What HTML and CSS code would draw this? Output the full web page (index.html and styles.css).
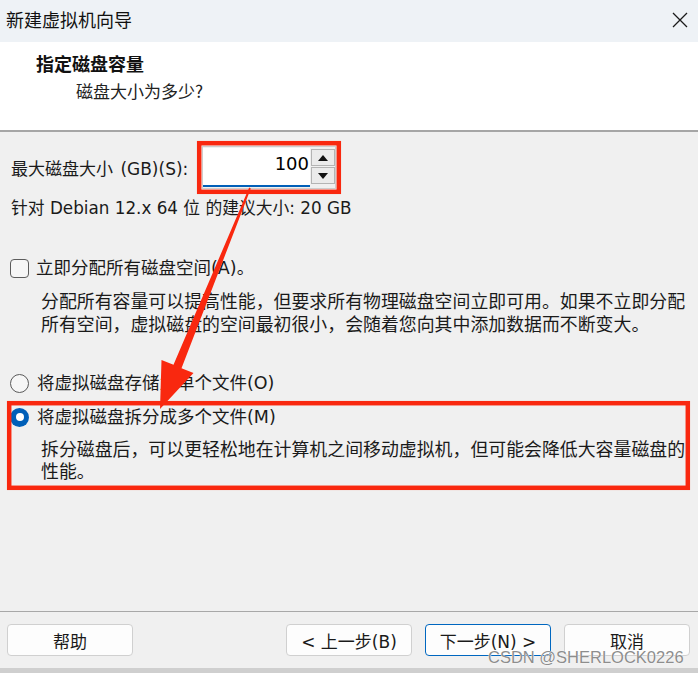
FILE: index.html
```html
<!DOCTYPE html>
<html lang="zh-CN">
<head>
<meta charset="utf-8">
<title>新建虚拟机向导</title>
<link rel="stylesheet" href="styles.css">
</head>
<body>
<div class="window">
  <div class="titlebar">
    <span class="title">新建虚拟机向导</span>
    <svg class="close" width="16" height="16" viewBox="0 0 16 16"><path d="M1 1 L15 15 M15 1 L1 15" stroke="#1a1a1a" stroke-width="1.3" fill="none"/></svg>
  </div>
  <div class="header">
    <div class="h-title">指定磁盘容量</div>
    <div class="h-sub">磁盘大小为多少?</div>
  </div>
  <div class="body">
    <div class="size-row">
      <span class="size-label">最大磁盘大小 (GB)(S):</span>
      <div class="field">
        <div class="num">100</div>
        <div class="spinner">
          <div class="spin-btn"><svg width="10" height="6" viewBox="0 0 10 6"><path d="M5 0 L10 6 L0 6 Z" fill="#111"/></svg></div>
          <div class="spin-btn"><svg width="10" height="6" viewBox="0 0 10 6"><path d="M0 0 L10 0 L5 6 Z" fill="#111"/></svg></div>
        </div>
      </div>
    </div>
    <div class="suggest">针对 Debian 12.x 64 位 的建议大小: 20 GB</div>
    <label class="opt check-row">
      <span class="checkbox"></span>
      <span class="opt-label">立即分配所有磁盘空间(A)。</span>
    </label>
    <p class="desc">分配所有容量可以提高性能，但要求所有物理磁盘空间立即可用。如果不立即分配所有空间，虚拟磁盘的空间最初很小，会随着您向其中添加数据而不断变大。</p>
    <label class="opt radio-row first">
      <span class="radio"></span>
      <span class="opt-label">将虚拟磁盘存储为单个文件(O)</span>
    </label>
    <label class="opt radio-row second">
      <span class="radio checked"></span>
      <span class="opt-label">将虚拟磁盘拆分成多个文件(M)</span>
    </label>
    <p class="desc desc2">拆分磁盘后，可以更轻松地在计算机之间移动虚拟机，但可能会降低大容量磁盘的性能。</p>
  </div>
  <div class="footer">
    <button class="btn">帮助</button>
    <div class="btn-group">
      <button class="btn">&lt; 上一步(B)</button>
      <button class="btn primary">下一步(N) &gt;</button>
      <button class="btn">取消</button>
    </div>
  </div>
  <div class="strip"></div>
  <svg class="annot" width="698" height="673" viewBox="0 0 698 673">
    <rect x="199.2" y="143.2" width="139.6" height="48.6" fill="none" stroke="#f9280f" stroke-width="4.5"/>
    <rect x="9.2" y="403.2" width="678.6" height="84.6" fill="none" stroke="#f9280f" stroke-width="4.5"/>
    <polygon points="249.2,187.6 250.8,188.4 181.5,368.2 193.5,373 160,409 161.5,360 173.5,364.8" fill="#f9280f"/>
  </svg>
  <div class="watermark">CSDN @SHERLOCK0226</div>
</div>
</body>
</html>
```

FILE: styles.css
```css
* { box-sizing: border-box; }
html, body { margin: 0; padding: 0; }
body {
  width: 698px;
  height: 673px;
  overflow: hidden;
  font-family: "DejaVu Sans", "Noto Sans CJK SC", sans-serif;
  color: #1a1a1a;
  background: #f0f0f0;
}
.window {
  position: relative;
  width: 698px;
  height: 673px;
  display: flex;
  flex-direction: column;
}
.titlebar {
  height: 42px;
  background: #eef2f6;
  display: flex;
  align-items: center;
  justify-content: space-between;
  padding: 0 10px 0 6px;
}
.title {
  font-family: "Noto Sans CJK SC", sans-serif;
  font-size: 18px;
  color: #111;
  position: relative;
  top: -2px;
}
.close { margin-top: -3px; }
.header {
  background: #ffffff;
  border-bottom: 2px solid #a6a6a6;
  padding: 7px 0 0 36px;
  box-sizing: content-box;
  height: 81px;
}
.h-title {
  font-family: "Noto Sans CJK SC", sans-serif;
  font-weight: 700;
  font-size: 18px;
  line-height: 28px;
  color: #111;
}
.h-sub {
  font-family: "Noto Sans CJK SC", sans-serif;
  font-size: 17px;
  line-height: 26px;
  margin-left: 40px;
  margin-top: 1px;
  color: #222;
}
.body {
  flex: 1;
  padding: 14px 0 0 11px;
  background: #f0f0f0;
}
.size-row {
  display: flex;
  align-items: center;
  height: 43px;
}
.size-label {
  font-size: 17px;
  word-spacing: 2px;
  width: 191px;
  white-space: nowrap;
}
.field {
  display: flex;
  height: 43px;
  width: 134px;
  border: 1px solid #cdcdcd;
  background: #f0f0f0;
}
.num {
  width: 107px;
  height: 39px;
  margin-top: 1px;
  background: #fff;
  border-bottom: 2px solid #005fb8;
  text-align: right;
  font-size: 18px;
  line-height: 32px;
  padding-right: 1px;
  color: #000;
}
.spinner {
  display: flex;
  flex-direction: column;
  gap: 1px;
  padding: 2px 0 0 1px;
}
.spin-btn {
  width: 24px;
  height: 17px;
  border: 1px solid #b4b4b4;
  background: #ebebeb;
  display: flex;
  align-items: center;
  justify-content: center;
}
.suggest {
  margin-top: 8px;
  font-size: 16.8px;
  line-height: 22px;
}
.opt {
  display: flex;
  align-items: center;
  height: 24px;
  gap: 7px;
  font-size: 17.5px;
}
.check-row { margin-top: 37px; }
.checkbox {
  width: 19px;
  height: 19px;
  border: 1.3px solid #5c5c5c;
  border-radius: 4px;
  background: #f6f6f6;
  margin-left: -1px;
}
.opt-label { line-height: 24px; }
.desc {
  margin: 9px 0 0 30px;
  font-family: "Noto Sans CJK SC", sans-serif;
  font-size: 17.9px;
  line-height: 23px;
  color: #1a1a1a;
  width: 650px;
}
.radio-row { gap: 8px; }
.radio-row.first { margin-top: 36px; }
.radio-row.second { margin-top: 10px; }
.radio {
  width: 19px;
  height: 19px;
  border-radius: 50%;
  border: 1.3px solid #5a5a5a;
  background: #f6f6f6;
  margin-left: -1px;
}
.radio.checked {
  border: none;
  background: #005fb8;
  display: flex;
  align-items: center;
  justify-content: center;
}
.radio.checked::after {
  content: "";
  width: 8px;
  height: 8px;
  border-radius: 50%;
  background: #fff;
}
.desc2 { margin-top: 8px; line-height: 22px; }
.footer {
  height: 57px;
  border-top: 1px solid #a8a8a8;
  display: flex;
  justify-content: space-between;
  align-items: flex-start;
  padding: 12px 8px 0 7px;
}
.btn-group {
  display: flex;
  gap: 13px;
}
.btn {
  width: 126px;
  height: 32px;
  border: 1px solid #d0d0d0;
  border-radius: 4px;
  background: #fdfdfd;
  font-family: "DejaVu Sans", "Noto Sans CJK SC", sans-serif;
  font-size: 17px;
  color: #1a1a1a;
  padding: 0;
}
.btn.primary { border-color: #0067c0; }
.strip {
  height: 5px;
  background: #cfcfcf;
}
.annot {
  position: absolute;
  left: 0;
  top: 0;
  pointer-events: none;
}
.watermark {
  position: absolute;
  left: 488px;
  top: 648px;
  font-family: "Liberation Sans", sans-serif;
  font-size: 16.5px;
  color: #8d8d8d;
  text-shadow: 0 0 1px #fff, 0 0 1px #fff;
}
```
